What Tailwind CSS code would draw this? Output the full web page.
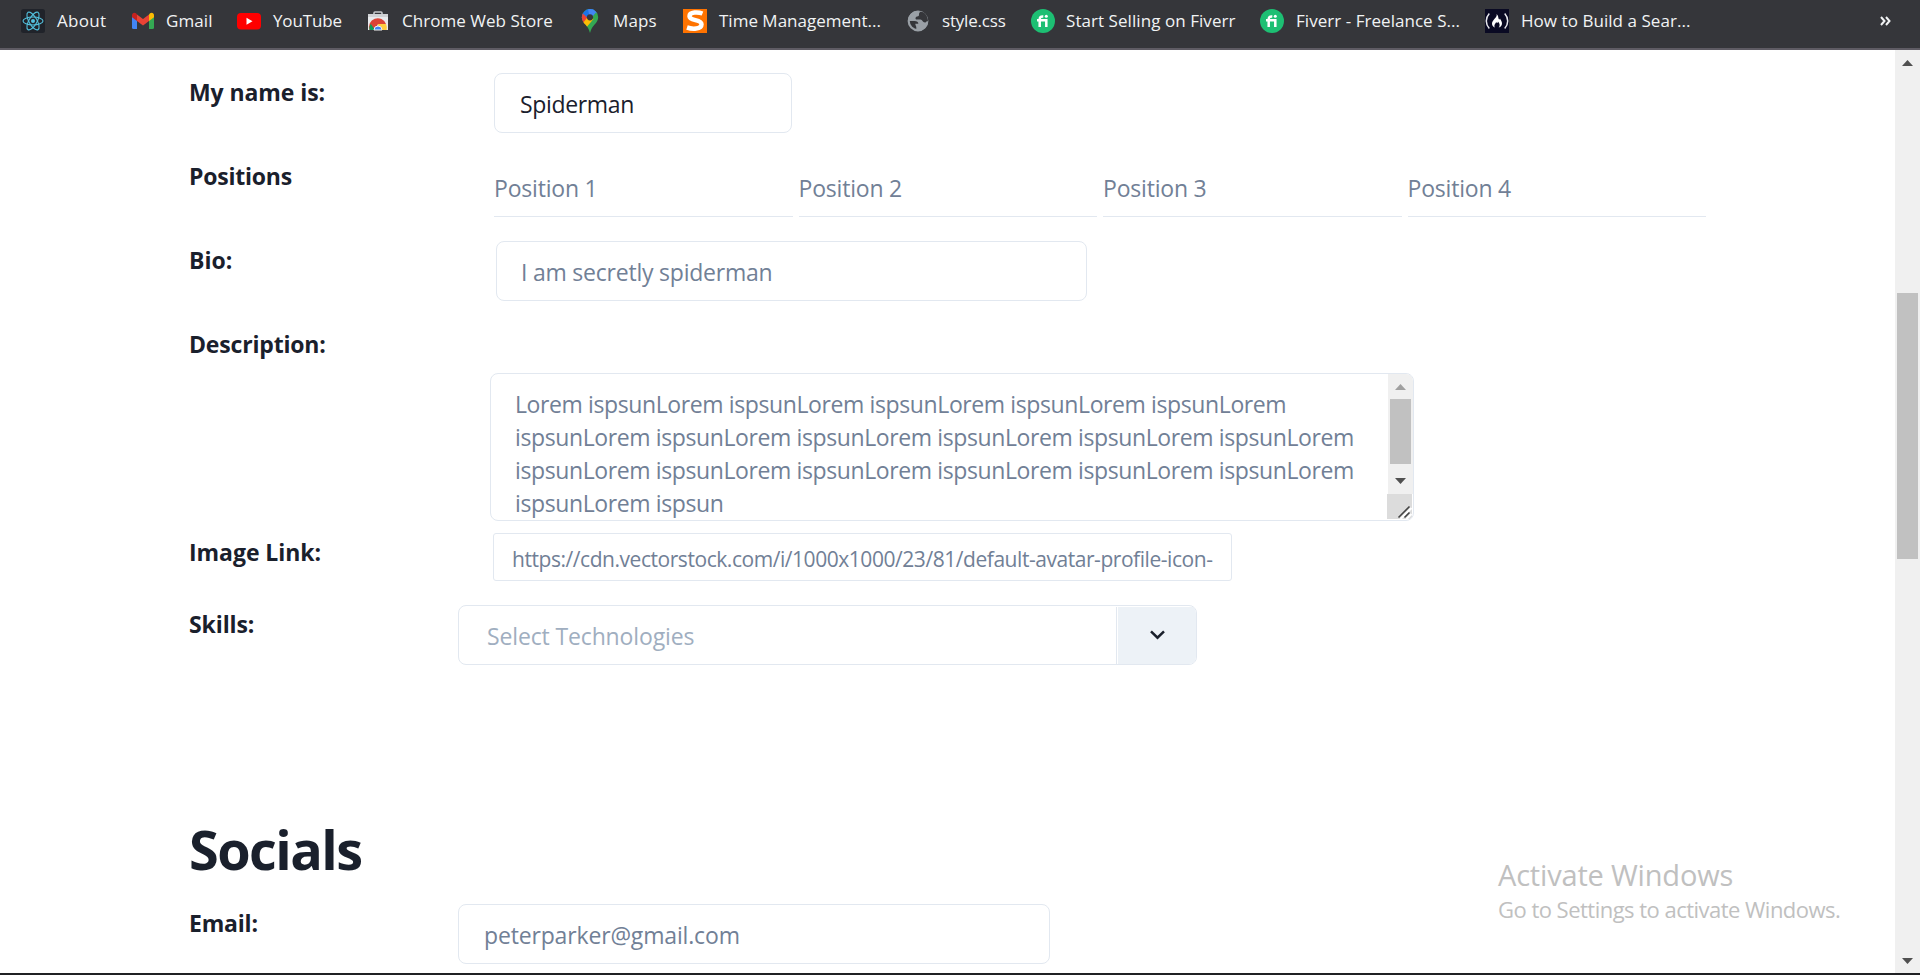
<!DOCTYPE html>
<html lang="en">
<head>
<meta charset="utf-8">
<title>Profile form</title>
<script src="https://cdn.jsdelivr.net/npm/@tailwindcss/browser@4"></script>
</head>
<body class="relative flex h-[975px] w-[1920px] flex-col overflow-hidden bg-white font-['Open_Sans','Noto_Sans',sans-serif] text-[#1a202c]">

<!-- Bookmarks bar -->
<nav class="flex h-[50px] shrink-0 items-start border-b-2 border-[#5f5c64] bg-[#35363a] pt-[9px] pl-[21px] text-[17px] leading-6 whitespace-nowrap text-[#f1f3f4]">
  <a class="flex w-[110px] shrink-0 gap-9">
    <svg class="-mr-6 size-6 shrink-0" viewBox="0 0 24 24"><rect width="24" height="24" rx="2.5" fill="#20232a"/><g fill="none" stroke="#53c1de" stroke-width="1.1"><ellipse cx="12" cy="12" rx="10" ry="4"/><ellipse cx="12" cy="12" rx="10" ry="4" transform="rotate(60 12 12)"/><ellipse cx="12" cy="12" rx="10" ry="4" transform="rotate(120 12 12)"/></g><circle cx="12" cy="12" r="2" fill="#53c1de"/></svg>
    <span class="tracking-[0.3px]">About</span>
  </a>
  <a class="flex w-[106px] shrink-0 gap-[35px]">
    <svg class="-mr-6 size-6 shrink-0" viewBox="0 0 24 24"><path d="M1 7v11.500a1.500 1.500 0 0 0 1.500 1.500H6V10z" fill="#4285f4"/><path d="M18 10v10h3.500a1.500 1.500 0 0 0 1.500-1.500V7z" fill="#34a853"/><path d="M6 5.500l6 4.600 6-4.600V12l-6 4.600L6 12z" fill="#ea4335"/><path d="M18 5.500V12l5-3.800V6.300c0-2.600-2.500-3.200-4-2z" fill="#fbbc04"/><path d="M6 5.500V12L1 8.200V6.300c0-2.600 2.500-3.200 4-2z" fill="#c5221f"/></svg>
    <span class="tracking-[0.1px]">Gmail</span>
  </a>
  <a class="flex w-[129px] shrink-0 gap-9">
    <svg class="-mr-6 size-6 shrink-0" viewBox="0 0 24 24"><rect y="4" width="24" height="16.500" rx="4" fill="#f00"/><path d="M9.500 8.700v7l6-3.500z" fill="#fff"/></svg>
    <span class="tracking-[-0.14px]">YouTube</span>
  </a>
  <a class="flex w-[212px] shrink-0 gap-9">
    <svg class="-mr-6 size-6 shrink-0" viewBox="0 0 24 24"><path d="M8 6V4q0-1 1-1h6q1 0 1 1v2" fill="none" stroke="#c4c7ca" stroke-width="1.600"/><path d="M2 5h20v16H2z" fill="#e8eaed"/><path d="M2 5h20v3H2z" fill="#d0d2d5"/><path d="M3.500 21A8.700 8.700 0 0 1 20 15h-8l-3 6z" fill="#db4437"/><path d="M3.500 21a9 9 0 0 1 1.200-6.300L9 21z" fill="#0f9d58"/><path d="M12 15h8a9 9 0 0 1 .6 6H12z" fill="#ffcd40"/><path d="M8 21a4 4 0 1 1 8 0z" fill="#4285f4" stroke="#f1f1f1"/></svg>
    <span class="tracking-[0.04px]">Chrome Web Store</span>
  </a>
  <a class="flex w-[105px] shrink-0 gap-[35px]">
    <svg class="-mr-6 size-6 shrink-0" viewBox="0 0 24 24"><clipPath id="pin"><path d="M12 0a8.200 8.200 0 0 0-8.200 8.200c0 3 1.600 5 3.600 7.400 2 2.400 3.500 4.400 4.600 8.400 1.100-4 2.600-6 4.600-8.400s3.600-4.400 3.600-7.400A8.200 8.200 0 0 0 12 0z"/></clipPath><g clip-path="url(#pin)"><path d="M0 0h24v24H0z" fill="#34a853"/><path d="M0 0h18L7.500 13 0 8z" fill="#1a73e8"/><path d="M3 3l8 7-6 7H0V3z" fill="#ea4335"/><path d="M5 14l5.500-7 5 3L7 20z" fill="#fbbc04"/><path d="M10 0h11v6l-3-2.500-6 7z" fill="#4285f4"/></g><circle cx="12" cy="8.300" r="3.100" fill="#35363a"/></svg>
    <span class="tracking-[0.1px]">Maps</span>
  </a>
  <a class="flex w-[223px] shrink-0 gap-9">
    <svg class="-mr-6 size-6 shrink-0" viewBox="0 0 24 24"><rect width="24" height="24" fill="#ff7300"/><path d="M19.500 4.500c-4-1.500-13-2-13 2.700 0 5 12 2.800 12 8 0 5.300-9.500 5-14.500 3.300" fill="none" stroke="#fff" stroke-width="4.500"/></svg>
    <span>Time Management...</span>
  </a>
  <a class="flex w-[125px] shrink-0 gap-9">
    <svg class="-mr-6 size-6 shrink-0" viewBox="0 0 24 24"><circle cx="12" cy="12" r="9.300" fill="#35363a" stroke="#9aa0a6" stroke-width="2.200"/><path d="M13 2.500c-2 0-3 1.500-2.500 3 .3 1-.8 1.600-2 2-1.300.6-1 2 .5 2h4c2 0 2.500 2.500 4.500 2.500 1.300 0 2.500.8 4.500.5C22 6 18 2 13 2.500z" fill="#35363a"/><path d="M12 2C6 2 2 6.500 2 12h6.500c2.500 0 3.800 1 3.800 2.800h-3c0 1.700 1 2.200 1 3.700v3.300L12 22c5.500 0 10-4.500 10-10-1 1-2 1.500-3 1.500-2.500 0-2.500-3-4.500-3h-4c-1.300 0-1.500-2.500.5-3 2-.4 2-.7 2-2C13 4 13.500 3 15 2.500z" fill="#9aa0a6"/></svg>
    <span class="tracking-[-0.2px]">style.css</span>
  </a>
  <a class="flex w-[229px] shrink-0 gap-[35px]">
    <svg class="-mr-6 size-6 shrink-0" viewBox="0 0 24 24"><circle cx="12" cy="12" r="12" fill="#1dbf73"/><path d="M8.700 18v-7.500c0-2.400 1-3.200 3.600-3M6 11.200h9.300V18" fill="none" stroke="#fff" stroke-width="2.500"/><circle cx="15.300" cy="7.300" r="1.500" fill="#fff"/></svg>
    <span class="tracking-[0.06px]">Start Selling on Fiverr</span>
  </a>
  <a class="flex w-[225px] shrink-0 gap-9">
    <svg class="-mr-6 size-6 shrink-0" viewBox="0 0 24 24"><circle cx="12" cy="12" r="12" fill="#1dbf73"/><path d="M8.700 18v-7.500c0-2.400 1-3.200 3.600-3M6 11.200h9.300V18" fill="none" stroke="#fff" stroke-width="2.500"/><circle cx="15.300" cy="7.300" r="1.500" fill="#fff"/></svg>
    <span class="tracking-[0.04px]">Fiverr - Freelance S...</span>
  </a>
  <a class="flex shrink-0 gap-9">
    <svg class="-mr-6 size-6 shrink-0" viewBox="0 0 24 24"><rect width="24" height="24" fill="#0a0a23"/><path d="M4.300 4.500c-4 4.500-4 10.500 0 15M19.700 4.500c4 4.500 4 10.500 0 15" fill="none" stroke="#e8e8ee" stroke-width="1.500"/><path d="M11.500 5c1.500 3-4.500 6-4.500 9.500 0 2 1.200 3.500 3 4-1.500-2 .2-3.500 1.200-5.500.5 1.500 2 1 1.700-.5 2 1.800 2.300 4.500.8 6 2-.5 3.500-2.200 3.300-4.500-.2-2-1.500-3-2-4.500-.3 1-1 1.300-1.300.5C13 8 13.500 6.500 11.500 5z" fill="#fff"/></svg>
    <span class="tracking-[0.05px]">How to Build a Sear...</span>
  </a>
  <svg class="mt-[7px] mr-[29px] ml-auto h-[10px] w-[11px]" viewBox="0 0 11 10" fill="none" stroke="#f1f3f4" stroke-width="2"><path d="M1 1l3.500 4L1 9M6 1l3.500 4L6 9"/></svg>
</nav>

<div class="flex min-h-0 flex-1">
  <main class="flex-1 overflow-hidden pt-[23px] pl-[189px] text-[23px] leading-9">
    <div class="flex h-[84px]">
      <label class="w-[305px] pt-px font-bold tracking-[-0.08px]">My name is:</label>
      <div class="h-[60px] w-[298px] rounded-lg border border-[#e2e8f0] pt-3 pl-[25px] tracking-[-0.35px]">Spiderman</div>
    </div>
    <div class="flex h-[84px]">
      <label class="w-[305px] pt-px font-bold tracking-[-0.22px]">Positions</label>
      <div class="grid h-[60px] w-[1212px] grid-cols-4 gap-1.5 tracking-[-0.2px] text-[#718096]">
        <div class="border-b border-[#e2e8f0] pt-[13px]">Position 1</div>
        <div class="border-b border-[#e2e8f0] pt-[13px]">Position 2</div>
        <div class="border-b border-[#e2e8f0] pt-[13px]">Position 3</div>
        <div class="border-b border-[#e2e8f0] pt-[13px]">Position 4</div>
      </div>
    </div>
    <div class="flex h-[84px]">
      <label class="w-[307px] pt-px font-bold">Bio:</label>
      <div class="h-[60px] w-[591px] rounded-lg border border-[#e2e8f0] pt-3 pl-6 tracking-[-0.22px] text-[#718096]">I am secretly spiderman</div>
    </div>
    <label class="block h-12 pt-px font-bold tracking-[-0.18px]">Description:</label>
    <div class="ml-[301px] flex h-[148px] w-[924px] justify-between overflow-hidden rounded-lg border border-[#e2e8f0]">
      <p class="pt-[14px] pl-6 leading-[33px] tracking-[-0.39px] whitespace-nowrap text-[#718096]">Lorem ispsunLorem ispsunLorem ispsunLorem ispsunLorem ispsunLorem<br>ispsunLorem ispsunLorem ispsunLorem ispsunLorem ispsunLorem ispsunLorem<br>ispsunLorem ispsunLorem ispsunLorem ispsunLorem ispsunLorem ispsunLorem<br>ispsunLorem ispsun</p>
      <div class="flex w-[26px] flex-col">
        <div class="flex h-[120px] w-[25px] flex-col items-center self-end bg-[#f0f0f0]">
          <svg class="mt-[10px] h-[6px] w-[11px]" viewBox="0 0 11 6"><path d="M0 6L5.500 0 11 6z" fill="#a0a0a0"/></svg>
          <div class="mt-[9px] h-[65px] w-[21px] bg-[#c1c1c1]"></div>
          <svg class="mt-[14px] h-[6px] w-[11px]" viewBox="0 0 11 6"><path d="M0 0h11L5.500 6z" fill="#505050"/></svg>
        </div>
        <svg class="size-[25px]" viewBox="0 0 25 25"><rect width="25" height="25" fill="#dcdcdc"/><path d="M12 24L23 13M18 24l5-5" stroke="#fff" stroke-width="2" transform="translate(1.500 1)"/><path d="M11.500 23.500l11-11M17.500 23.500l5-5" stroke="#444" stroke-width="1.600"/></svg>
      </div>
    </div>
    <div class="mt-3 flex h-12">
      <label class="w-[304px] pt-px font-bold tracking-[-0.05px]">Image Link:</label>
      <div class="h-12 w-[739px] rounded-[3px] border border-[#e2e8f0] pt-[7px] pl-[18px] text-[21px] tracking-[-0.45px] whitespace-nowrap text-[#718096]">https://cdn.vectorstock.com/i/1000x1000/23/81/default-avatar-profile-icon-</div>
    </div>
    <div class="mt-6 flex h-[60px]">
      <label class="w-[269px] pt-px font-bold tracking-[-0.1px]">Skills:</label>
      <div class="flex h-[60px] w-[739px] justify-between overflow-hidden rounded-lg border border-[#e2e8f0]">
        <span class="pt-3 pl-7 tracking-[-0.14px] text-[#a0aec0]">Select Technologies</span>
        <div class="mt-px w-[80px] border-l border-[#e2e8f0] pl-px">
          <div class="flex h-full items-center justify-center bg-[#edf2f7]">
            <svg class="mb-px h-[10px] w-[15px]" viewBox="0 0 15 10" fill="none" stroke="#1a202c" stroke-width="2.500"><path d="M1 1.300l6.500 6.400L14 1.300"/></svg>
          </div>
        </div>
      </div>
    </div>
    <h2 class="mt-[154px] text-[54px] leading-[60px] font-bold tracking-[-1.55px]">Socials</h2>
    <div class="mt-[25px] flex h-[60px]">
      <label class="w-[269px] pt-px font-bold tracking-[-0.2px]">Email:</label>
      <div class="h-[60px] w-[592px] rounded-lg border border-[#e2e8f0] pt-3 pl-[25px] tracking-[-0.16px] text-[#718096]">peterparker@gmail.com</div>
    </div>
  </main>

  <!-- Page scrollbar -->
  <aside class="flex w-[25px] shrink-0 flex-col items-center bg-[#f0f0f0]">
    <svg class="mt-[10px] h-[6px] w-[11px]" viewBox="0 0 11 6"><path d="M0 6L5.500 0 11 6z" fill="#505050"/></svg>
    <div class="mt-[227px] h-[266px] w-[21px] bg-[#c1c1c1]"></div>
    <svg class="mt-auto mb-[9px] h-[6px] w-[11px]" viewBox="0 0 11 6"><path d="M0 0h11L5.500 6z" fill="#505050"/></svg>
  </aside>
</div>
<div class="h-0.5 shrink-0 bg-[#202124]"></div>

<!-- Activation watermark -->
<div class="absolute top-[855px] left-[1498px] whitespace-nowrap text-[#c0c0c0]">
  <p class="text-[29px] leading-10 tracking-[-0.18px]">Activate Windows</p>
  <p class="text-[22px] leading-7 tracking-[-0.52px]">Go to Settings to activate Windows.</p>
</div>
</body>
</html>
